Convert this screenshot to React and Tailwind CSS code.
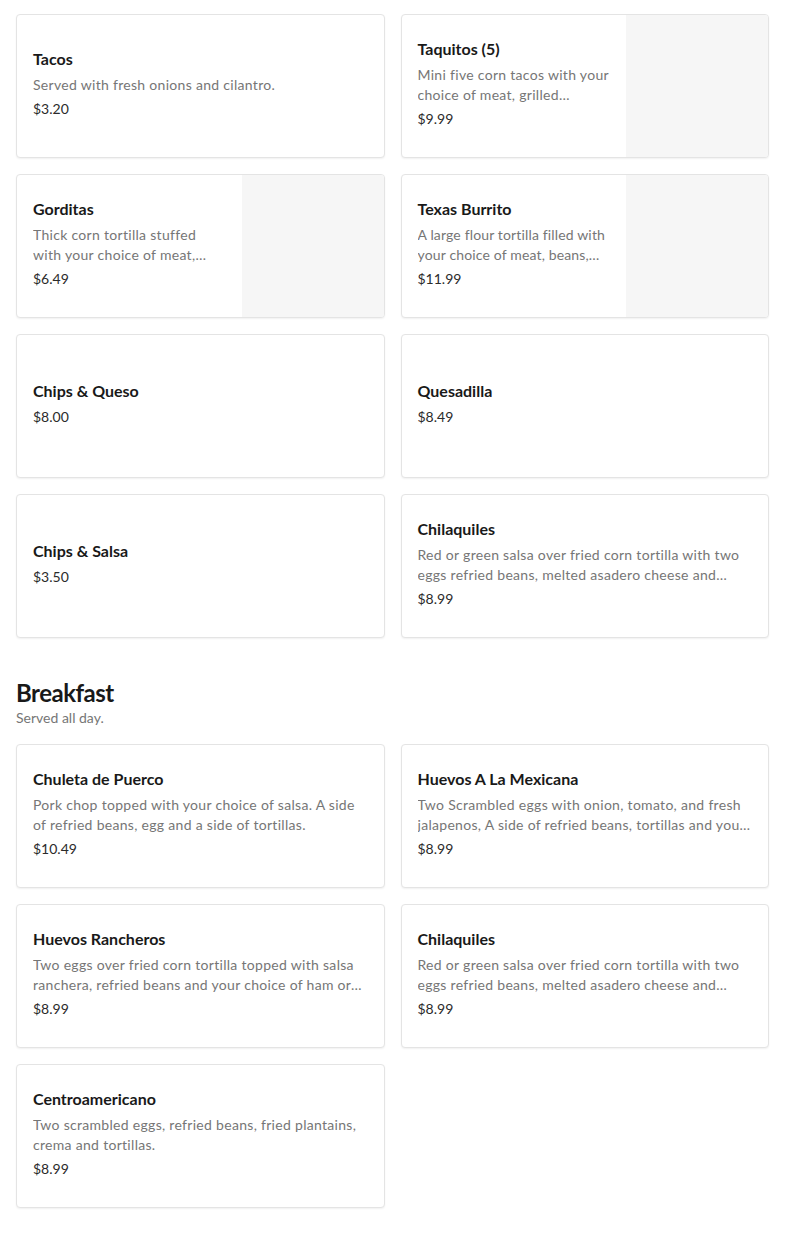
import React from "react";

const top = [
  { t: "Tacos", d: "Served with fresh onions and cilantro.", p: "$3.20" },
  { t: "Taquitos (5)", d: "Mini five corn tacos with your choice of meat, grilled jalapeños, onions, cilantro and salsa.", p: "$9.99", img: true },
  { t: "Gorditas", d: "Thick corn tortilla stuffed with your choice of meat, beans, cheese, lettuce and tomato.", p: "$6.49", img: true },
  { t: "Texas Burrito", d: "A large flour tortilla filled with your choice of meat, beans, rice, cheese and salsa.", p: "$11.99", img: true, tight: true },
  { t: "Chips & Queso", p: "$8.00" },
  { t: "Quesadilla", p: "$8.49" },
  { t: "Chips & Salsa", p: "$3.50" },
  { t: "Chilaquiles", d: "Red or green salsa over fried corn tortilla with two eggs refried beans, melted asadero cheese and crema. Served with tortillas.", p: "$8.99" },
];

const breakfast = [
  { t: "Chuleta de Puerco", d: "Pork chop topped with your choice of salsa. A side of refried beans, egg and a side of tortillas.", p: "$10.49" },
  { t: "Huevos A La Mexicana", d: "Two Scrambled eggs with onion, tomato, and fresh jalapenos, A side of refried beans, tortillas and your choice of drink.", p: "$8.99" },
  { t: "Huevos Rancheros", d: "Two eggs over fried corn tortilla topped with salsa ranchera, refried beans and your choice of ham or chorizo.", p: "$8.99" },
  { t: "Chilaquiles", d: "Red or green salsa over fried corn tortilla with two eggs refried beans, melted asadero cheese and crema. Served with tortillas.", p: "$8.99" },
  { t: "Centroamericano", d: "Two scrambled eggs, refried beans, fried plantains, crema and tortillas.", p: "$8.99" },
];

function Card({ item }) {
  return (
    <div className="flex h-[144px] overflow-hidden rounded-[4px] border border-[#e4e4e4] bg-white shadow-[0_1px_2px_rgba(0,0,0,0.06)]">
      <div className="flex min-w-0 flex-1 flex-col justify-center pb-[4px] pl-[16px] pr-[16px]">
        <div className="text-[16px] font-bold leading-[20px] text-[#191919]">{item.t}</div>
        {item.d && (
          <div
            className={`mt-[6px] line-clamp-2 text-[14px] leading-[20px] text-[#767676] ${
              item.tight ? "tracking-[0.15px]" : "tracking-[0.3px]"
            }`}
          >
            {item.d}
          </div>
        )}
        <div className={`${item.d ? "mt-[4px]" : "mt-[6px]"} text-[14px] leading-[20px] text-[#2b2b2b]`}>{item.p}</div>
      </div>
      {item.img && <div className="w-[142px] shrink-0 bg-[#f6f6f6]" />}
    </div>
  );
}

export default function App() {
  return (
    <div className="min-h-[1244px] bg-white px-[16px] pt-[14px] font-['Lato','Liberation_Sans',sans-serif]">
      <div className="grid grid-cols-2 gap-[16px]">
        {top.map((it, i) => (
          <Card key={i} item={it} />
        ))}
      </div>
      <div className="mt-[41px]">
        <h2 className="text-[24px] font-bold leading-[28px] tracking-[-0.5px] text-[#191919]">Breakfast</h2>
        <div className="mt-[1px] text-[14px] leading-[20px] text-[#767676]">Served all day.</div>
      </div>
      <div className="mt-[16px] grid grid-cols-2 gap-[16px]">
        {breakfast.map((it, i) => (
          <Card key={i} item={it} />
        ))}
      </div>
    </div>
  );
}
